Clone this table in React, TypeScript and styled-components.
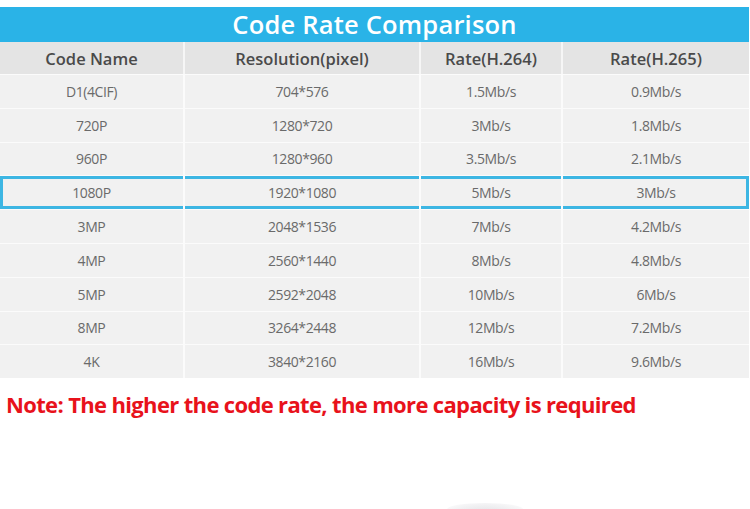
import React from 'react';
import styled, { createGlobalStyle } from 'styled-components';

const GlobalStyle = createGlobalStyle`
  html, body {
    margin: 0;
    padding: 0;
    background: #ffffff;
  }
  body {
    font-family: 'Open Sans', 'Liberation Sans', sans-serif;
  }
`;

type Row = {
  name: string;
  resolution: string;
  h264: string;
  h265: string;
  active?: boolean;
};

const rows: Row[] = [
  { name: 'D1(4CIF)', resolution: '704*576', h264: '1.5Mb/s', h265: '0.9Mb/s' },
  { name: '720P', resolution: '1280*720', h264: '3Mb/s', h265: '1.8Mb/s' },
  { name: '960P', resolution: '1280*960', h264: '3.5Mb/s', h265: '2.1Mb/s' },
  { name: '1080P', resolution: '1920*1080', h264: '5Mb/s', h265: '3Mb/s', active: true },
  { name: '3MP', resolution: '2048*1536', h264: '7Mb/s', h265: '4.2Mb/s' },
  { name: '4MP', resolution: '2560*1440', h264: '8Mb/s', h265: '4.8Mb/s' },
  { name: '5MP', resolution: '2592*2048', h264: '10Mb/s', h265: '6Mb/s' },
  { name: '8MP', resolution: '3264*2448', h264: '12Mb/s', h265: '7.2Mb/s' },
  { name: '4K', resolution: '3840*2160', h264: '16Mb/s', h265: '9.6Mb/s' },
];

const App = () => (
  <Page>
    <GlobalStyle />
    <Title>Code Rate Comparison</Title>
    <Table>
      <HeadRow>
        <HeadCell>Code Name</HeadCell>
        <HeadCell>Resolution(pixel)</HeadCell>
        <HeadCell>Rate(H.264)</HeadCell>
        <HeadCell>Rate(H.265)</HeadCell>
      </HeadRow>
      {rows.map((row) => (
        <BodyRow key={row.name} active={row.active}>
          <Cell>{row.name}</Cell>
          <Cell>{row.resolution}</Cell>
          <Cell>{row.h264}</Cell>
          <Cell>{row.h265}</Cell>
        </BodyRow>
      ))}
    </Table>
    <Note>Note: The higher the code rate, the more capacity is required</Note>
    <Footer>
      <Shade />
    </Footer>
  </Page>
);

const Page = styled.div`
  width: 750px;
  height: 509px;
  overflow: hidden;
  display: flex;
  flex-direction: column;
  padding-top: 7px;
  box-sizing: border-box;
`;

const Title = styled.div`
  width: 749px;
  height: 35px;
  background: #2ab3e7;
  color: #ffffff;
  font-family: 'Open Sans', sans-serif;
  font-weight: 600;
  font-size: 25.5px;
  line-height: 35px;
  text-align: center;
  letter-spacing: 0.2px;
`;

const Table = styled.div`
  width: 749px;
  display: flex;
  flex-direction: column;
`;

const columns = '183px 236px 142px 188px';

const HeadRow = styled.div`
  display: grid;
  grid-template-columns: ${columns};
  height: 32px;
  background: #e4e4e4;
`;

const HeadCell = styled.div`
  display: flex;
  align-items: center;
  justify-content: center;
  border-left: 2px solid #f6f6f6;
  font-family: 'Open Sans', sans-serif;
  font-weight: 600;
  font-size: 16.5px;
  color: #4a4a4a;

  &:first-child {
    border-left: none;
  }
`;

const BodyRow = styled.div<{ active?: boolean }>`
  display: grid;
  grid-template-columns: ${columns};
  height: 33.8px;
  background: #f1f1f1;
  border-top: 1.5px solid #fbfbfb;
  box-sizing: border-box;
  box-shadow: ${(p) => (p.active ? 'inset 0 0 0 3px #3db6e3' : 'none')};
`;

const Cell = styled.div`
  display: flex;
  align-items: center;
  justify-content: center;
  border-left: 2px solid #fbfbfb;
  font-family: 'Open Sans', sans-serif;
  font-size: 14px;
  color: #6a6a6a;
  letter-spacing: -0.4px;

  &:first-child {
    border-left: none;
  }
`;

const Note = styled.div`
  margin-top: 11px;
  padding-left: 6px;
  font-family: 'Open Sans', sans-serif;
  font-weight: 700;
  font-size: 22px;
  line-height: 30px;
  color: #e8121b;
  letter-spacing: -0.65px;
`;

const Footer = styled.div`
  flex: 1;
  display: flex;
  align-items: flex-end;
  justify-content: center;
  padding-left: 220px;
`;

const Shade = styled.div`
  width: 76px;
  height: 12px;
  margin-bottom: -6px;
  border-radius: 50% 50% 0 0;
  background: radial-gradient(ellipse at 50% 100%, #dedee2 0%, #f0f0f2 55%, #ffffff 100%);
`;

export default App;
